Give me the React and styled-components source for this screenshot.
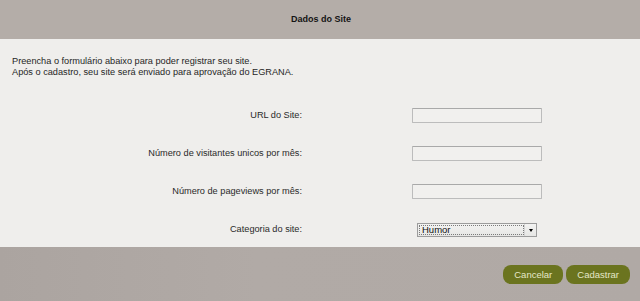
import React from "react";
import styled, { createGlobalStyle } from "styled-components";

const GlobalStyle = createGlobalStyle`
  html, body {
    margin: 0;
    padding: 0;
    background: #efeeec;
  }
  body {
    font-family: "Liberation Sans", Arial, sans-serif;
  }
`;

const fields = [
  { id: "url", label: "URL do Site:" },
  { id: "visitors", label: "Número de visitantes unicos por mês:" },
  { id: "pageviews", label: "Número de pageviews por mês:" },
];

const App = () => {
  return (
    <>
      <GlobalStyle />
      <Dialog>
        <Header>
          <Title>Dados do Site</Title>
        </Header>
        <Content>
          <Intro>
            Preencha o formulário abaixo para poder registrar seu site.
            <br />
            Após o cadastro, seu site será enviado para aprovação do EGRANA.
          </Intro>
          <Form>
            {fields.map((field) => (
              <React.Fragment key={field.id}>
                <Label htmlFor={field.id}>{field.label}</Label>
                <Input id={field.id} type='text' />
              </React.Fragment>
            ))}
            <Label htmlFor='categoria'>Categoria do site:</Label>
            <Select id='categoria'>
              <SelectValue>Humor</SelectValue>
              <SelectArrow>
                <Caret />
              </SelectArrow>
            </Select>
          </Form>
        </Content>
        <Footer>
          <Button>Cancelar</Button>
          <Button>Cadastrar</Button>
        </Footer>
      </Dialog>
    </>
  );
};

export default App;

const Dialog = styled.div`
  width: 640px;
  height: 301px;
  display: flex;
  flex-direction: column;
  background: #efeeec;
`;
const Header = styled.div`
  height: 39px;
  flex-shrink: 0;
  display: flex;
  align-items: center;
  justify-content: center;
  padding-bottom: 1px;
  box-sizing: border-box;
  background: #b4ada8;
`;
const Title = styled.h1`
  margin: 0 0 0 2px;
  font-size: 9px;
  font-weight: bold;
  color: #141414;
`;
const Content = styled.div`
  flex: 1;
  padding: 17px 12px 0;
  color: #262626;
`;
const Intro = styled.p`
  margin: 0;
  font-size: 9.2px;
  line-height: 11px;
`;
const Form = styled.div`
  display: grid;
  grid-template-columns: 290px auto;
  column-gap: 110px;
  row-gap: 23px;
  align-items: center;
  justify-items: start;
  margin-top: 30px;
`;
const Label = styled.label`
  justify-self: end;
  font-size: 9.2px;
  line-height: 15px;
  color: #2a2a2a;
`;
const Input = styled.input`
  width: 130px;
  height: 15px;
  box-sizing: border-box;
  margin: 0;
  padding: 0 3px;
  border: 1px solid #bcbcbc;
  border-top-color: #a9a9a9;
  border-radius: 1px;
  background: #f1f0ee;
  font-size: 9px;
`;
const Select = styled.div`
  width: 120px;
  height: 14px;
  box-sizing: border-box;
  margin: 1px 0 0 5px;
  display: flex;
  border: 1px solid #9c9c9c;
  background: linear-gradient(#f3f3f2, #e6e6e4);
`;
const SelectValue = styled.div`
  flex: 1;
  margin: 1px 0 1px 1px;
  padding-left: 2px;
  border: 1px dotted #7a7a7a;
  font-size: 9.5px;
  line-height: 8px;
  color: #111;
`;
const SelectArrow = styled.div`
  width: 11px;
  display: flex;
  align-items: center;
  justify-content: center;
  border-left: 1px solid #d4d4d4;
`;
const Caret = styled.span`
  width: 0;
  height: 0;
  border-left: 2.5px solid transparent;
  border-right: 2.5px solid transparent;
  border-top: 3px solid #000;
`;
const Footer = styled.div`
  height: 54px;
  flex-shrink: 0;
  box-sizing: border-box;
  display: flex;
  justify-content: flex-end;
  align-items: flex-start;
  gap: 3px;
  padding: 18px 10px 0;
  background: linear-gradient(90deg, #aba4a0, #b1aaa6 40%, #b0a9a5);
`;
const Button = styled.button`
  height: 19px;
  padding: 0 11px;
  border: none;
  border-radius: 8px;
  background: #6b741f;
  color: #e4e7c8;
  font-family: "Liberation Sans", Arial, sans-serif;
  font-size: 9.5px;
  cursor: pointer;
`;
